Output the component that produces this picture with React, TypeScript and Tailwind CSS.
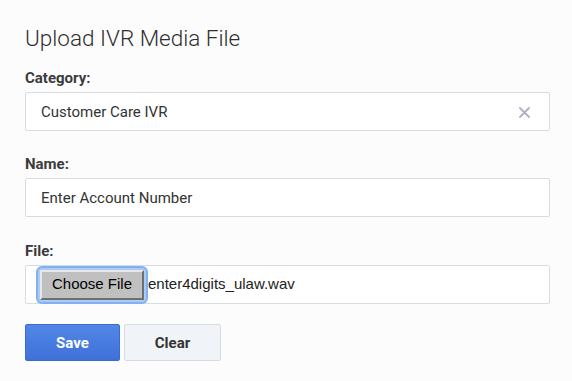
const fields = {
  category: 'Customer Care IVR',
  name: 'Enter Account Number',
  file: 'enter4digits_ulaw.wav',
};

function Label({ children }: { children: string }) {
  return (
    <div className="h-[20px] text-[15px] leading-[20px] font-bold text-[#3b3b3b]">{children}</div>
  );
}

function ClearIcon() {
  return (
    <svg width="11" height="11" viewBox="0 0 11 11" className="shrink-0">
      <path d="M1 1 L10 10 M10 1 L1 10" stroke="#aab3bf" strokeWidth="1.8" strokeLinecap="round" />
    </svg>
  );
}

export default function App() {
  return (
    <div
      className="min-h-[381px] w-[572px] bg-[#fcfcfd] pl-[25px] pr-[22px] pt-[25px]"
      style={{ fontFamily: 'Roboto, "Liberation Sans", sans-serif' }}
    >
      <h1 className="h-[26px] text-[22.5px] leading-[26px] font-light text-[#2f2f2f]">
        Upload IVR Media File
      </h1>

      <div className="mt-[17px]">
        <Label>Category:</Label>
        <div className="mt-[4px] flex h-[39px] items-center justify-between rounded-[2px] border border-[#d6dce4] bg-white pl-[15px] pr-[19px] pt-[2px] text-[15px] text-[#333]">
          <span>{fields.category}</span>
          <ClearIcon />
        </div>
      </div>

      <div className="mt-[23px]">
        <Label>Name:</Label>
        <div className="mt-[4px] flex h-[39px] items-center rounded-[2px] border border-[#d6dce4] bg-white pl-[15px] pt-[2px] text-[15px] text-[#333]">
          {fields.name}
        </div>
      </div>

      <div className="mt-[24px]">
        <Label>File:</Label>
        <div className="mt-[4px] flex h-[39px] items-center rounded-[2px] border border-[#d6dce4] bg-white pl-[12px]">
          <div className="rounded-[4px] p-[2px] ring-[2px] ring-[#80b2f2] bg-[#a9cbf6]">
            <div
              className="flex h-[30px] w-[104px] items-center justify-center border-[2px] border-t-[#e8e8e8] border-l-[#e8e8e8] border-b-[#6f6f6f] border-r-[#6f6f6f] bg-[#c0c0c0] text-[15px] text-black"
              style={{ fontFamily: '"Liberation Sans", Arial, sans-serif' }}
            >
              Choose File
            </div>
          </div>
          <span
            className="ml-[2px] text-[15px] text-[#222]"
            style={{ fontFamily: '"Liberation Sans", Arial, sans-serif' }}
          >
            {fields.file}
          </span>
        </div>
      </div>

      <div className="mt-[20px] flex gap-[4px]">
        <button className="h-[37px] w-[95px] rounded-[2px] border border-[#3b6bd2] bg-gradient-to-b from-[#5287e6] to-[#3f70d8] pt-[2px] text-[15px] font-bold text-white">
          Save
        </button>
        <button className="h-[37px] w-[97px] rounded-[2px] border border-[#d6dce4] bg-[#f0f3f7] pt-[2px] text-[15px] font-bold text-[#333]">
          Clear
        </button>
      </div>
    </div>
  );
}
